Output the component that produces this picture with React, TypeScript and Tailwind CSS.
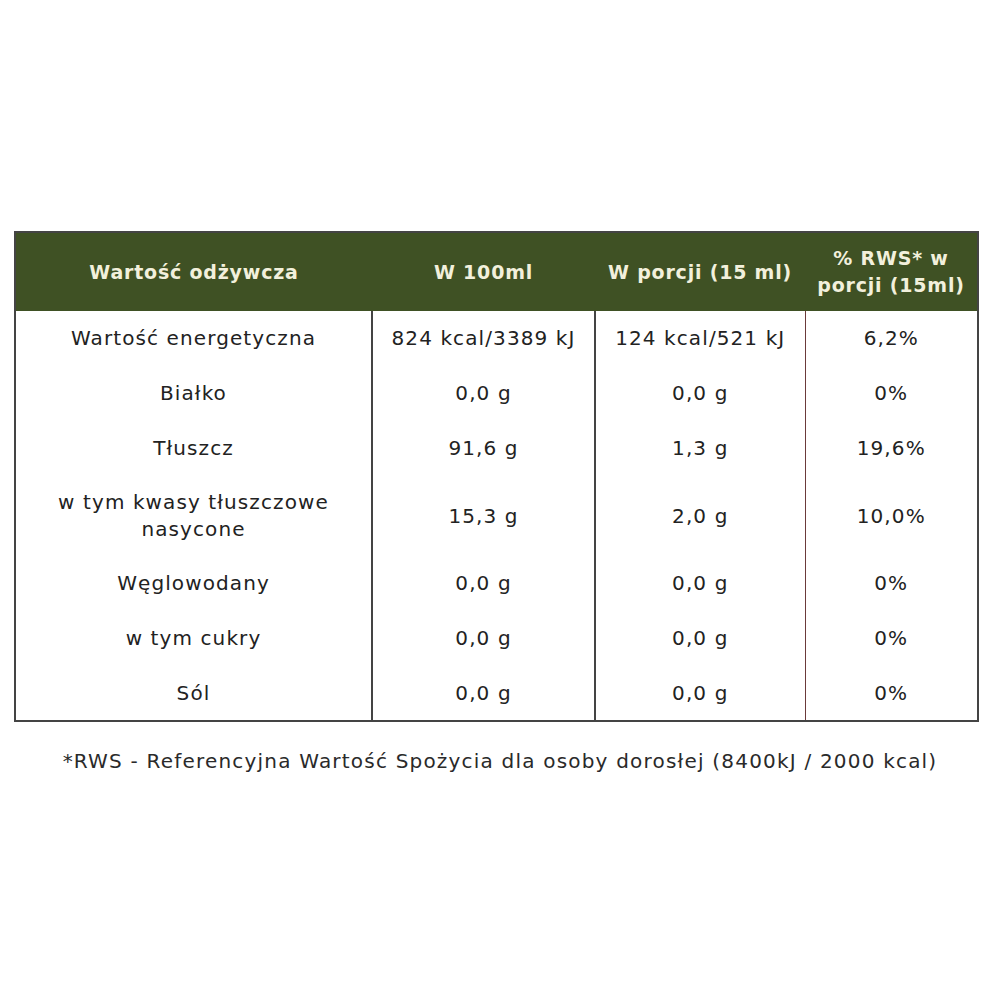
import React from 'react';

const rows: [string, string, string, string][] = [
    ['Wartość energetyczna', '824 kcal/3389 kJ', '124 kcal/521 kJ', '6,2%'],
    ['Białko', '0,0 g', '0,0 g', '0%'],
    ['Tłuszcz', '91,6 g', '1,3 g', '19,6%'],
    ['w tym kwasy tłuszczowe nasycone', '15,3 g', '2,0 g', '10,0%'],
    ['Węglowodany', '0,0 g', '0,0 g', '0%'],
    ['w tym cukry', '0,0 g', '0,0 g', '0%'],
    ['Sól', '0,0 g', '0,0 g', '0%'],
];

export default function App() {
    return (
        <div className="w-[1000px] h-[1000px] bg-white pt-[231px] px-[14px] text-[#222] font-['DejaVu_Sans',sans-serif]">
            <table className="w-[963px] border-collapse table-fixed border-2 border-[#444]">
                <colgroup>
                    <col className="w-[357px]" />
                    <col className="w-[223px]" />
                    <col className="w-[210px]" />
                    <col className="w-[173px]" />
                </colgroup>
                <thead>
                    <tr className="h-[79px] bg-[#3f5124] text-[#f2f0dc] font-bold text-[19px] leading-[27px] tracking-[0.8px]">
                        <th className="font-bold px-2 text-center">Wartość odżywcza</th>
                        <th className="font-bold px-2 text-center">W 100ml</th>
                        <th className="font-bold px-2 text-center">W porcji (15 ml)</th>
                        <th className="font-bold px-3 text-center">% RWS* w porcji (15ml)</th>
                    </tr>
                </thead>
                <tbody className="text-[20px] leading-[27px] tracking-[1.1px]">
                    {rows.map((r, i) => (
                        <tr key={i} className={i === 3 ? 'h-[80px]' : 'h-[55px]'}>
                            <td className="px-6 text-center border-r-2 border-[#444]">{r[0]}</td>
                            <td className="px-1 text-center border-r-2 border-[#444]">{r[1]}</td>
                            <td className="px-1 text-center border-r border-[#6b3a3a]">{r[2]}</td>
                            <td className="px-2 text-center">{r[3]}</td>
                        </tr>
                    ))}
                </tbody>
            </table>
            <p className="mt-[24px] text-center text-[20px] tracking-[1.2px] text-[#2a2a2a]">
                *RWS - Referencyjna Wartość Spożycia dla osoby dorosłej (8400kJ / 2000 kcal)
            </p>
        </div>
    );
}
